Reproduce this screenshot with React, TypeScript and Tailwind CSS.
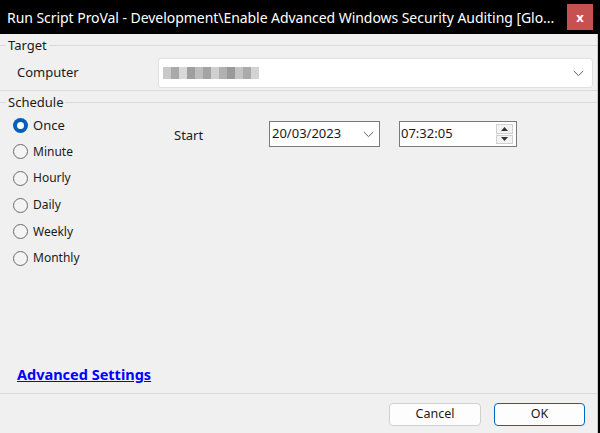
import React from "react";

const Line = () => <div className="h-px bg-[#dadada]" />;

function Radio({ label, checked, font }: { label: string; checked?: boolean; font?: string }) {
  return (
    <div className="flex items-center h-[26.6px]">
      {checked ? (
        <div className="w-[15px] h-[15px] rounded-full bg-[#005fb8] flex items-center justify-center">
          <div className="w-[7px] h-[7px] rounded-full bg-white" />
        </div>
      ) : (
        <div className="w-[15px] h-[15px] rounded-full border border-[#6b6b6b] bg-[#f4f4f4]" />
      )}
      <span className={"ml-[5px] text-[#1a1a1a] " + (font ?? "text-[12px]")}>{label}</span>
    </div>
  );
}

function Chevron() {
  return (
    <svg width="11" height="7" viewBox="0 0 11 7">
      <path d="M0.8 1 L5.5 5.6 L10.2 1" fill="none" stroke="#606060" strokeWidth="1" />
    </svg>
  );
}

export default function App() {
  const mosaic = ["#c9c9c9", "#a9a9a9", "#d8d8d8", "#9e9e9e", "#bdbdbd", "#a3a3a3", "#cfcfcf", "#b0b0b0", "#9a9a9a", "#c4c4c4", "#aaaaaa", "#d3d3d3"];
  return (
    <div className="w-[600px] h-[433px] bg-black flex flex-col overflow-hidden" style={{ fontFamily: '"Noto Sans", "Open Sans", sans-serif' }}>
      {/* Title bar */}
      <div className="h-[34px] flex items-center pl-[7px] pr-[7px] shrink-0">
        <span className="text-white text-[14px] tracking-[-0.05px] whitespace-nowrap flex-1 min-w-0">
          Run Script ProVal - Development\Enable Advanced Windows Security Auditing [Glo...
        </span>
        <div className="w-[26px] h-[26px] bg-[#c75050] flex items-center justify-center ml-[6px] shrink-0">
          <span className="text-white text-[13px] font-bold leading-none">x</span>
        </div>
      </div>

      {/* Body */}
      <div className="flex-1 bg-[#f0f0f0] flex flex-col border-r border-[#c8c8c8] w-[598px]">
        {/* Target group */}
        <div className="pt-[3px] flex items-center h-[19px]">
          <div className="w-[6px] h-px bg-[#dadada]" />
          <span className="px-[2px] text-[13px] text-[#1a1a1a] leading-none">Target</span>
          <div className="flex-1 h-px bg-[#dadada]" />
        </div>
        <div className="mt-[5px] flex items-center h-[30px]">
          <span className="ml-[17px] w-[141px] text-[13px] text-[#1a1a1a]">Computer</span>
          <div className="w-[435px] h-[30px] bg-white border border-[#e0e0e0] rounded-[3px] flex items-center pl-[4px] pr-[8px]">
            <div className="flex h-[12px] blur-[0.6px]">
              {mosaic.map((c, i) => (
                <div key={i} className="w-[8px] h-[12px]" style={{ background: c }} />
              ))}
            </div>
            <div className="flex-1" />
            <Chevron />
          </div>
        </div>
        <div className="mt-[2px]">
          <Line />
        </div>

        {/* Schedule group */}
        <div className="mt-[3px] flex items-center h-[16px]">
          <div className="w-[6px] h-px bg-[#dadada]" />
          <span className="px-[2px] text-[13px] text-[#1a1a1a] leading-none">Schedule</span>
          <div className="flex-1 h-px bg-[#dadada]" />
        </div>

        <div className="flex mt-[2px]">
          <div className="ml-[13px] w-[161px] flex flex-col">
            <Radio label="Once" checked font="text-[13px]" />
            <Radio label="Minute" />
            <Radio label="Hourly" />
            <Radio label="Daily" />
            <Radio label="Weekly" />
            <Radio label="Monthly" />
          </div>
          <div className="flex items-center h-[26px] mt-[9px]">
            <span className="w-[95px] text-[13px] text-[#1a1a1a] pt-[3px]">Start</span>
            <div className="w-[111px] h-[26px] bg-white border border-[#7a7a7a] flex items-center pl-[2px] pr-[5px]">
              <span className="text-[13px] text-[#1a1a1a] flex-1">20/03/2023</span>
              <Chevron />
            </div>
            <div className="ml-[19px] w-[118px] h-[26px] bg-white border border-[#7a7a7a] flex items-center pl-[1px] pr-[3px]">
              <span className="text-[13px] text-[#1a1a1a] flex-1">07:32:05</span>
              <div className="flex flex-col w-[17px] h-[20px] gap-[1px]">
                <div className="flex-1 bg-[#f3f3f3] border border-[#d0d0d0] flex items-center justify-center">
                  <svg width="7" height="4" viewBox="0 0 7 4"><path d="M0 4 L3.5 0 L7 4 Z" fill="#333" /></svg>
                </div>
                <div className="flex-1 bg-[#f3f3f3] border border-[#d0d0d0] flex items-center justify-center">
                  <svg width="7" height="4" viewBox="0 0 7 4"><path d="M0 0 L3.5 4 L7 0 Z" fill="#333" /></svg>
                </div>
              </div>
            </div>
          </div>
        </div>

        <div className="flex-1" />
        <div className="pl-[17px] h-[18px] flex items-center">
          <span className="text-[14.5px] font-bold text-[#0000ff] underline">Advanced Settings</span>
        </div>
        <div className="mt-[9px]">
          <Line />
        </div>
        <div className="flex justify-end pr-[12px] pt-[9px] pb-[7px] gap-[13px]">
          <div className="w-[92px] h-[23px] bg-[#fdfdfd] border border-[#d0d0d0] rounded-[4px] flex items-center justify-center text-[12.5px] text-[#1a1a1a]">
            Cancel
          </div>
          <div className="w-[91px] h-[23px] bg-[#fdfdfd] border border-[#0067c0] rounded-[4px] flex items-center justify-center text-[12.5px] text-[#1a1a1a]">
            OK
          </div>
        </div>
      </div>
    </div>
  );
}
